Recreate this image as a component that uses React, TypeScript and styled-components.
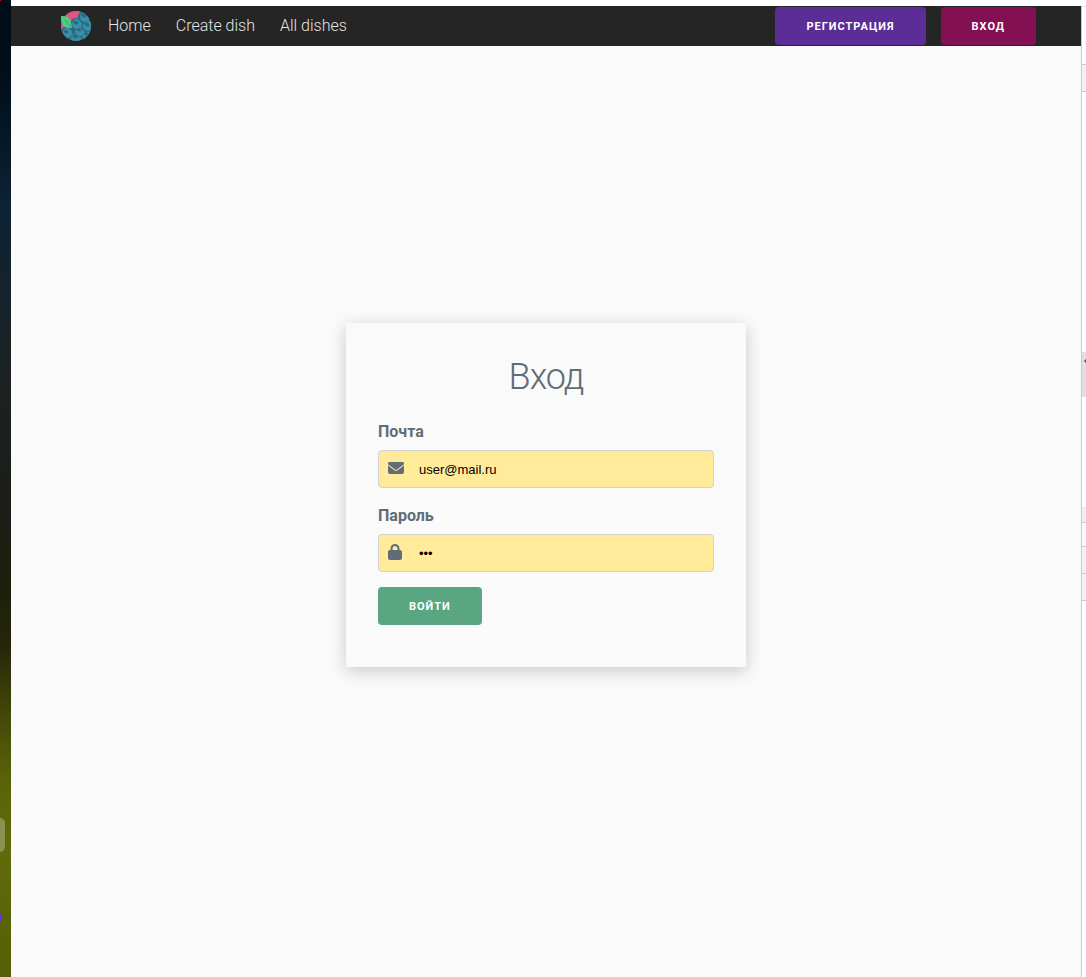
import React from "react";
import styled, { createGlobalStyle } from "styled-components";
import { FaEnvelope, FaLock } from "react-icons/fa6";

const GlobalStyle = createGlobalStyle`
  * { box-sizing: border-box; }
  body {
    margin: 0;
    background: #fff;
    color: #606c76;
    font-family: Roboto, "Noto Sans", sans-serif;
    font-size: 16px;
    line-height: 26px;
  }
`;

const Desktop = styled.div`
  display: flex;
  min-height: 100vh;
`;

const Wallpaper = styled.div`
  position: relative;
  flex: none;
  width: 11px;
  overflow: hidden;
  background: linear-gradient(
    #000d18 0%, #000f1b 8%, #0d2233 21%, #12232e 27%, #1c2223 38%, #1b1e18 52%,
    #1e1f0c 60%, #24260a 66%, #444708 73%, #5b6309 80%, #606b09 87%, #565f05 100%
  );
`;

const WallpaperMark = styled.span<{ $top: string; $width: number; $height: number; $color: string }>`
  position: absolute;
  left: 0;
  top: ${(p) => p.$top};
  width: ${(p) => p.$width}px;
  height: ${(p) => p.$height}px;
  border-radius: 0 ${(p) => p.$width}px ${(p) => p.$width}px 0;
  background: ${(p) => p.$color};
`;

const Page = styled.div`
  display: flex;
  flex: 1;
  flex-direction: column;
  min-width: 0;
  padding-top: 6px;
`;

const Header = styled.header`
  display: flex;
  align-items: center;
  justify-content: space-between;
  height: 40px;
  padding: 0 45px 0 50px;
  background: #252525;
`;

const Nav = styled.nav`
  display: flex;
  align-items: center;
  gap: 25px;
`;

const Brand = styled.a`
  display: flex;
  margin-right: -8px;
`;

const NavLink = styled.a`
  color: #e4e4e4;
  font-weight: 300;
  text-decoration: none;
`;

const Actions = styled.div`
  display: flex;
  gap: 15px;
`;

const Button = styled.button<{ $color: string }>`
  height: 38px;
  padding: 1px 31px 0;
  border: 0;
  border-radius: 4px;
  background: ${(p) => p.$color};
  color: #fff;
  font: 700 11px/38px Roboto, "Noto Sans", sans-serif;
  letter-spacing: 1px;
  text-transform: uppercase;
  white-space: nowrap;
  cursor: pointer;
`;

const Main = styled.main`
  display: flex;
  flex: 1;
  align-items: center;
  justify-content: center;
  padding-bottom: 33px;
  background: #fafafa;
`;

const Card = styled.form`
  width: 400px;
  max-width: 100%;
  padding: 32px 32px 42px;
  background: #fafafa;
  box-shadow: 0 4px 16px rgba(0, 0, 0, 0.2);
`;

const Title = styled.h1`
  margin: 0 0 19px;
  font-size: 36px;
  font-weight: 300;
  line-height: 45px;
  letter-spacing: -1px;
  text-align: center;
`;

const Field = styled.div`
  margin-bottom: 15px;
`;

const Label = styled.label`
  display: block;
  margin-bottom: 5px;
  font-weight: 700;
`;

const InputBox = styled.div`
  display: flex;
  height: 38px;
  border: 1px solid #d1d1d1;
  border-radius: 4px;
  background: #ffeb99;
`;

const IconSlot = styled.span`
  flex: none;
  width: 30px;
  padding: 9px 0 0 9px;
  line-height: 0;
`;

const LockIcon = styled(FaLock)`
  width: 14px;
  height: 16px;
`;

const Input = styled.input`
  flex: 1;
  min-width: 0;
  padding: 0 10px;
  border: 0;
  outline: 0;
  background: transparent;
  color: #000;
  font: 13px "Liberation Sans", Arial, sans-serif;
`;

const SidePanel = styled.aside`
  flex: none;
  width: 5px;
  margin-top: 6px;
  overflow: hidden;
  border-left: 1px solid #c8c8ce;
  border-top: 1px solid #e4e4e6;
`;

const PanelRow = styled.div<{ $height: number; $color?: string; $line?: boolean }>`
  height: ${(p) => p.$height}px;
  background: ${(p) => p.$color ?? "#fff"};
  border-bottom: ${(p) => (p.$line ? "1px solid #c9cad2" : "0")};
`;

const PanelArrow = styled.svg`
  display: block;
  padding-top: 7px;
`;

const berries = [
  [25, 24],
  [14, 27],
  [5, 22],
  [18, 20],
  [26, 15],
  [15, 13],
  [23, 6],
];

function Logo() {
  return (
    <svg width="30" height="30" viewBox="0 0 30 30" aria-label="Dishes" role="img">
      <defs>
        <clipPath id="disc">
          <circle cx="15" cy="15" r="15" />
        </clipPath>
      </defs>
      <g clipPath="url(#disc)">
        <rect width="30" height="30" fill="#27647a" />
        <path d="M0 0H20L16 8L9 13L4 17L0 20Z" fill="#dd5585" />
        {berries.map(([x, y]) => (
          <g key={`${x}-${y}`} transform={`translate(${x} ${y})`}>
            <circle r="6" fill="#2a6a80" />
            <circle cx="1" r="5" fill="#3a8ea8" />
            <path d="M-3 -3Q-1 2 2 0Q3 -2 0 -3" fill="#2a6a80" />
          </g>
        ))}
      </g>
      <path d="M0 5Q9 4 10 11L11 17Q2 18 0 10Z" fill="#4bce82" />
      <path d="M4 9L10 16" stroke="#2ba568" strokeWidth="1" />
    </svg>
  );
}

export default function App() {
  return (
    <>
      <GlobalStyle />
      <Desktop>
        <Wallpaper aria-hidden="true">
          <WallpaperMark $top="0" $width={1} $height={1} $color="#f00" />
          <WallpaperMark $top="83.7%" $width={5} $height={34} $color="#8a9250" />
          <WallpaperMark $top="89.1%" $width={1} $height={3} $color="#963f3c" />
          <WallpaperMark $top="93.5%" $width={1} $height={9} $color="#5a35d8" />
        </Wallpaper>
        <Page>
          <Header>
            <Nav>
              <Brand href="#"><Logo /></Brand>
              <NavLink href="#home">Home</NavLink>
              <NavLink href="#create">Create dish</NavLink>
              <NavLink href="#dishes">All dishes</NavLink>
            </Nav>
            <Actions>
              <Button type="button" $color="#5c2d96">Регистрация</Button>
              <Button type="button" $color="#821052">Вход</Button>
            </Actions>
          </Header>
          <Main>
            <Card onSubmit={(e) => e.preventDefault()}>
              <Title>Вход</Title>
              <Field>
                <Label htmlFor="email">Почта</Label>
                <InputBox>
                  <IconSlot><FaEnvelope size={16} /></IconSlot>
                  <Input id="email" type="email" defaultValue="user@mail.ru" />
                </InputBox>
              </Field>
              <Field>
                <Label htmlFor="password">Пароль</Label>
                <InputBox>
                  <IconSlot><LockIcon /></IconSlot>
                  <Input id="password" type="password" defaultValue="123" />
                </InputBox>
              </Field>
              <Button type="submit" $color="#5aa582">Войти</Button>
            </Card>
          </Main>
        </Page>
        <SidePanel aria-hidden="true">
          <PanelRow $height={58} $line />
          <PanelRow $height={27} $color="#f1f2f5" $line />
          <PanelRow $height={260} />
          <PanelRow $height={45} $color="#dfdfdf">
            <PanelArrow width="4" height="11" viewBox="0 0 4 4">
              <path d="M2 2L4 0V4Z" fill="#555" />
            </PanelArrow>
          </PanelRow>
          <PanelRow $height={110} />
          <PanelRow $height={16} $color="#efefef" $line />
          <PanelRow $height={24} $color="#f8f9fe" $line />
          <PanelRow $height={27} $color="#f1f2f5" $line />
          <PanelRow $height={27} $color="#f1f2f5" $line />
        </SidePanel>
      </Desktop>
    </>
  );
}
